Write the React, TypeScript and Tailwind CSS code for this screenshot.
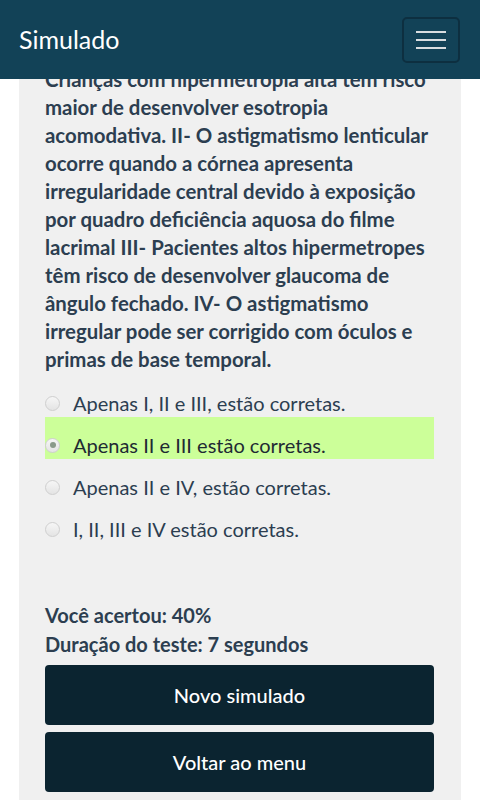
import { useState } from 'react';

// Question lines kept as in the reference wrap
const questionLines = [
  'Crianças com hipermetropia alta têm risco',
  'maior de desenvolver esotropia',
  'acomodativa. II- O astigmatismo lenticular',
  'ocorre quando a córnea apresenta',
  'irregularidade central devido à exposição',
  'por quadro deficiência aquosa do filme',
  'lacrimal III- Pacientes altos hipermetropes',
  'têm risco de desenvolver glaucoma de',
  'ângulo fechado. IV- O astigmatismo',
  'irregular pode ser corrigido com óculos e',
  'primas de base temporal.',
];

const options = [
  'Apenas I, II e III, estão corretas.',
  'Apenas II e III estão corretas.',
  'Apenas II e IV, estão corretas.',
  'I, II, III e IV estão corretas.',
];

export default function App() {
  const [selected, setSelected] = useState(1);

  return (
    <div className="relative min-h-[800px] bg-white font-['Lato','Liberation_Sans',sans-serif] text-[#2c3e50]">
      {/* Top navbar, fixed over the scrolled content */}
      <header className="fixed inset-x-0 top-0 z-10 flex h-[79px] items-center justify-between bg-[#124257] pl-[19px] pr-[20px]">
        <span className="text-[25px] text-white">Simulado</span>
        <button className="flex h-[46px] w-[58px] flex-col items-center justify-center gap-[6px] rounded-[5px] border-2 border-[#0d2f40]">
          <span className="block h-[2px] w-[30px] bg-[#d8dde0]" />
          <span className="block h-[2px] w-[30px] bg-[#d8dde0]" />
          <span className="block h-[2px] w-[30px] bg-[#d8dde0]" />
        </button>
      </header>

      <main className="mx-[19px] min-h-[800px] bg-[#f0f0f0] pl-[26px] pr-[27px] pt-[65px] pb-4">
        <p className="whitespace-nowrap text-[20.4px] font-bold leading-[28px]">
          {questionLines.map((line, i) => (
            <span key={i} className="block">
              {line}
            </span>
          ))}
        </p>

        <div className="mt-[2px] flex flex-col">
          {options.map((opt, i) => (
            <label
              key={i}
              className={`flex h-[42px] items-center gap-[13px] pt-[18px] pb-[4px] text-[20px] leading-[20px] ${
                i === selected ? 'bg-[#ccff99] text-[#1e2a33]' : ''
              }`}
              onClick={() => setSelected(i)}
            >
              <span className="flex h-[15px] w-[15px] items-center justify-center rounded-full border border-[#cfcfcf] bg-gradient-to-b from-[#f6f6f6] to-[#e4e4e4]">
                {i === selected && <span className="h-[6px] w-[6px] rounded-full bg-[#8a9a8a]" />}
              </span>
              <span>{opt}</span>
            </label>
          ))}
        </div>

        <div className="mt-[58px] text-[20px] font-bold leading-[29px]">
          <div>Você acertou: 40%</div>
          <div>Duração do teste: 7 segundos</div>
        </div>

        <div className="mt-[6px] flex flex-col gap-[7px]">
          <button className="h-[60px] rounded-[4px] bg-[#0b2430] text-[20px] font-medium text-white">
            Novo simulado
          </button>
          <button className="h-[60px] rounded-[4px] bg-[#0b2430] text-[20px] font-medium text-white">
            Voltar ao menu
          </button>
        </div>
      </main>
    </div>
  );
}
